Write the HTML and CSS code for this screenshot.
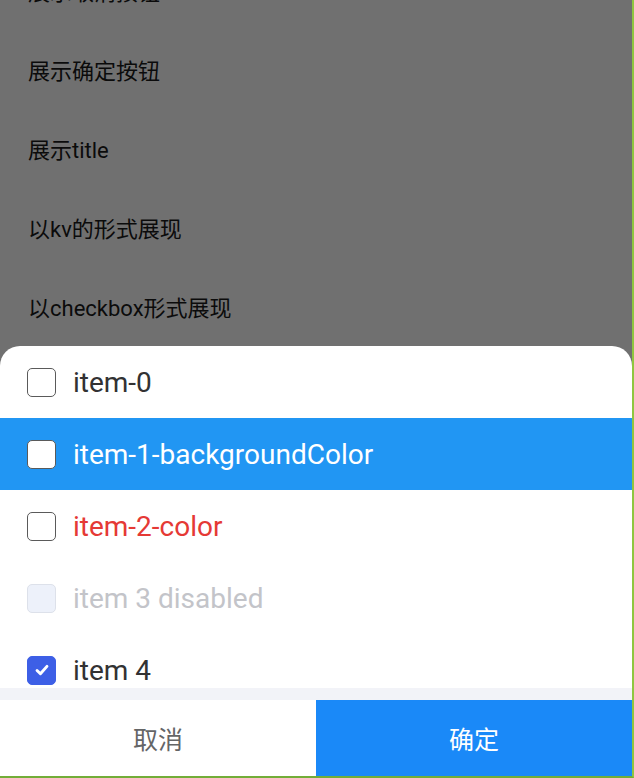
FILE: index.html
```html
<!DOCTYPE html>
<html lang="zh-CN">
  <head>
    <meta charset="UTF-8" />
    <meta name="viewport" content="width=device-width, initial-scale=1.0" />
    <title>Picker</title>
    <link rel="stylesheet" href="styles.css">
  </head>
  <body>
    <div class="screen">
      <div class="demo-list">
        <div class="demo-item">展示取消按钮</div>
        <div class="demo-item">展示确定按钮</div>
        <div class="demo-item">展示title</div>
        <div class="demo-item">以kv的形式展现</div>
        <div class="demo-item">以checkbox形式展现</div>
      </div>

      <div class="mask"></div>

      <div class="sheet">
        <div class="options">
          <div class="option">
            <span class="box"></span>
            <span class="label">item-0</span>
          </div>
          <div class="option option-highlight">
            <span class="box"></span>
            <span class="label">item-1-backgroundColor</span>
          </div>
          <div class="option option-red">
            <span class="box"></span>
            <span class="label">item-2-color</span>
          </div>
          <div class="option option-disabled">
            <span class="box"></span>
            <span class="label">item 3 disabled</span>
          </div>
          <div class="option option-checked">
            <span class="box">
              <svg width="18" height="18" viewBox="0 0 16 16">
                <path d="M3.6 8.4 L6.6 11.3 L12.4 4.8" fill="none" stroke="#fff" stroke-width="2.6" stroke-linecap="round" stroke-linejoin="round" />
              </svg>
            </span>
            <span class="label">item 4</span>
          </div>
        </div>
        <div class="divider"></div>
        <div class="actions">
          <button class="btn btn-cancel">取消</button>
          <button class="btn btn-confirm">确定</button>
        </div>
      </div>
    </div>
  </body>
</html>
```

FILE: styles.css
```css
html,
body {
  margin: 0;
  padding: 0;
  height: 100%;
  overflow: hidden;
}
body {
  font-family: Roboto, "Noto Sans CJK SC", sans-serif;
  background-color: #ffffff;
}
.screen {
  position: relative;
  width: 632px;
  height: 776px;
  border-right: 2px solid #8fc640;
  border-bottom: 2px solid #72ad38;
  overflow: hidden;
  background-color: #ffffff;
}
.demo-list {
  margin-top: -50px;
}
.demo-item {
  height: 79px;
  display: flex;
  align-items: center;
  padding-left: 28px;
  font-size: 22px;
  color: #1a1a1a;
}
.mask {
  position: absolute;
  top: 0;
  left: 0;
  right: 0;
  bottom: 0;
  background-color: rgba(0, 0, 0, 0.56);
}
.sheet {
  position: absolute;
  left: 0;
  right: 0;
  bottom: 0;
  top: 346px;
  background-color: #ffffff;
  border-radius: 20px 20px 0 0;
  overflow: hidden;
  display: flex;
  flex-direction: column;
}
.options {
  height: 342px;
  overflow: hidden;
}
.option {
  height: 72px;
  flex-shrink: 0;
  display: flex;
  align-items: center;
  padding-left: 27px;
  gap: 17px;
  font-size: 28px;
  color: #323233;
}
.box {
  width: 27px;
  height: 27px;
  border: 1.5px solid #5a5a5a;
  border-radius: 5px;
  background-color: #ffffff;
  display: flex;
  align-items: center;
  justify-content: center;
}
.option-highlight {
  background-color: #2196f3;
  color: #ffffff;
}
.option-red {
  color: #e53935;
}
.option-disabled {
  color: #c3c4c9;
}
.option-disabled .box {
  background-color: #edf1fa;
  border-color: #dde1ea;
}
.option-checked .box {
  background-color: #3d5fe6;
  border-color: #3d5fe6;
}
.divider {
  height: 12px;
  background-color: #f2f3f8;
}
.actions {
  display: flex;
  height: 76px;
}
.btn {
  flex: 1;
  border: none;
  margin: 0;
  padding: 0;
  font-family: "Noto Sans CJK SC", sans-serif;
  font-size: 25px;
  cursor: pointer;
}
.btn-cancel {
  background-color: #ffffff;
  color: #646566;
}
.btn-confirm {
  background-color: #1a89f8;
  color: #ffffff;
}
```
